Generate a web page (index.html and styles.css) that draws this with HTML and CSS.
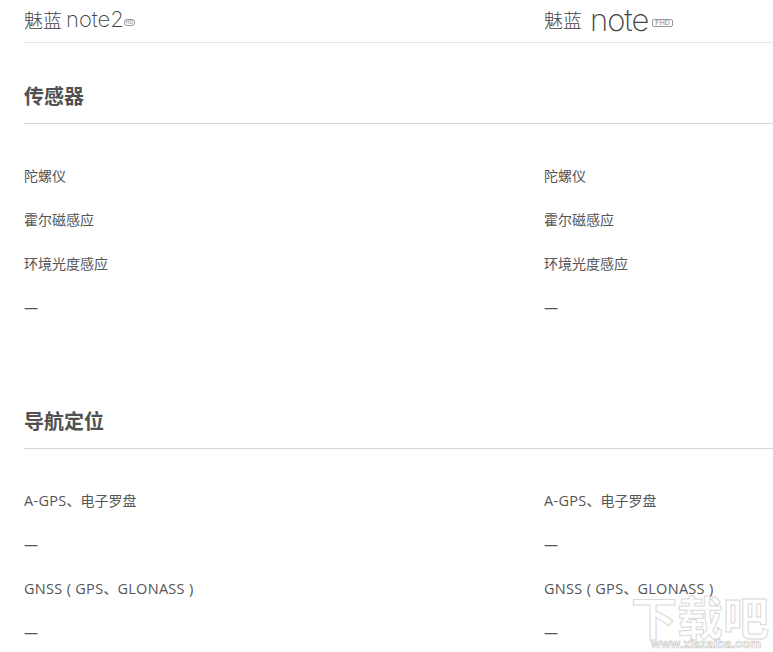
FILE: index.html
```html
<!DOCTYPE html>
<html lang="zh-CN">
<head>
<meta charset="utf-8">
<title>魅蓝 note2 / 魅蓝 note</title>
<link rel="stylesheet" href="styles.css">
</head>
<body>
<div class="page">
  <header class="head">
    <div class="logo"><span class="cn">魅蓝</span><span class="en">note2</span><span class="tag tag-small">HD</span></div>
    <div class="logo"><span class="cn">魅蓝</span><span class="en en-big">note</span><span class="tag">FHD</span></div>
  </header>
  <section class="sec">
    <h2 class="title">传感器</h2>
    <div class="grid">
      <div class="cell">陀螺仪</div><div class="cell">陀螺仪</div>
      <div class="cell">霍尔磁感应</div><div class="cell">霍尔磁感应</div>
      <div class="cell">环境光度感应</div><div class="cell">环境光度感应</div>
      <div class="cell">—</div><div class="cell">—</div>
    </div>
  </section>
  <section class="sec">
    <h2 class="title">导航定位</h2>
    <div class="grid">
      <div class="cell"><span class="lat">A-GPS</span>、电子罗盘</div><div class="cell"><span class="lat">A-GPS</span>、电子罗盘</div>
      <div class="cell">—</div><div class="cell">—</div>
      <div class="cell"><span class="lat">GNSS ( GPS</span>、<span class="lat">GLONASS )</span></div><div class="cell"><span class="lat">GNSS ( GPS</span>、<span class="lat">GLONASS )</span></div>
      <div class="cell">—</div><div class="cell">—</div>
    </div>
  </section>
</div>
<div class="mark">
  <div class="mark-cn">下载吧</div>
  <div class="mark-en">www.xiazaiba.com</div>
</div>
</body>
</html>
```
FILE: styles.css
```css
html, body { margin: 0; padding: 0; background: #fff; height: 652px; overflow: hidden; }
body { font-family: "Open Sans", "Noto Sans CJK SC", sans-serif; color: #555; position: relative; }
.page { padding-left: 24px; height: 652px; overflow: hidden; }
.head { display: grid; grid-template-columns: 520px 229px; height: 42px; border-bottom: 1px solid #e6e6e6; }
.logo { display: flex; align-items: center; height: 38px; color: #444; }
.cn { font-family: "Noto Sans CJK SC", sans-serif; font-weight: 300; font-size: 19px; }
.en { font-family: Inter, sans-serif; font-weight: 200; font-size: 22px; margin-left: 4px; line-height: 1; letter-spacing: 0; }
.en-big { font-size: 31px; margin-left: 8px; letter-spacing: -1px; }
.tag { font-family: "Liberation Sans", sans-serif; font-size: 7px; border: 1px solid #999; border-radius: 2px; color: #888; padding: 0 2px; margin: 8px 0 0 4px; line-height: 6px; }
.tag-small { font-size: 5px; line-height: 5px; padding: 0 1px; margin: 7px 0 0 0; border-radius: 3px; }
.sec { margin-bottom: 38px; }
.title { margin: 0; height: 80px; line-height: 105px; font-family: "Noto Sans CJK SC", sans-serif; font-weight: 700; font-size: 20px; color: #515151; border-bottom: 1px solid #d6d6d6; }
.grid { display: grid; grid-template-columns: 520px 229px; grid-auto-rows: 44px; padding-top: 30px; }
.cell { font-size: 14px; line-height: 44px; color: #555; white-space: nowrap; }
.lat { font-size: 14.5px; letter-spacing: 0.3px; }
.mark { position: absolute; left: 630px; top: 590px; width: 140px; text-align: center; color: #fff; pointer-events: none; }
.mark-cn { font-family: "Noto Sans CJK SC", sans-serif; font-weight: 700; font-size: 46px; line-height: 50px; -webkit-text-stroke: 1px #d9d9d9; }
.mark-en { font-family: "Liberation Sans", sans-serif; font-weight: 700; font-size: 12.5px; line-height: 9px; padding-left: 12px; -webkit-text-stroke: 0.6px #c4c4c4; }
```
